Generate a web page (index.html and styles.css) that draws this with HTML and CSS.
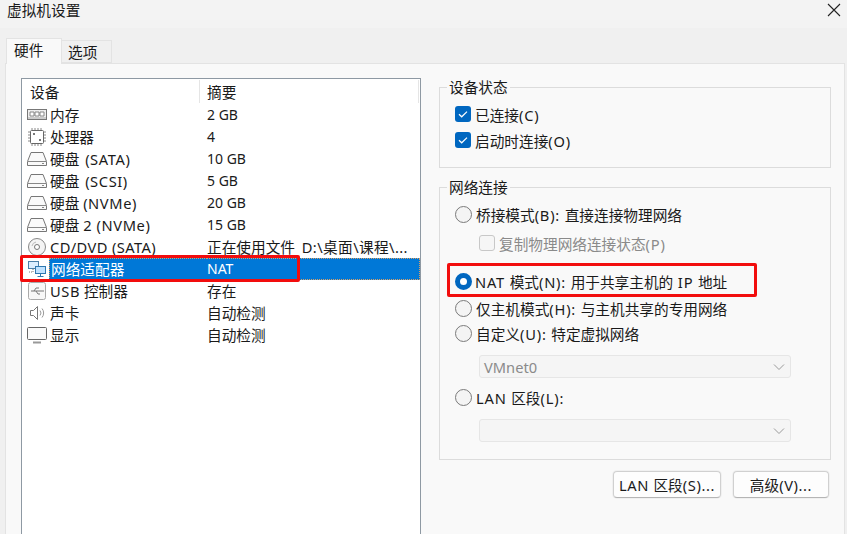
FILE: index.html
```html
<!DOCTYPE html>
<html>
<head>
  <meta charset="utf-8">
  <title>虚拟机设置</title>
  <link rel="stylesheet" href="styles.css">
</head>
<body>
  <div class="dialog">
    <div class="titlebar">
      <span>虚拟机设置</span>
      <svg class="close" width="14" height="14" viewBox="0 0 14 14"><path d="M1 1L13 13M13 1L1 13" stroke="#222" stroke-width="1.1" fill="none"/></svg>
    </div>

    <div class="tabs">
      <div class="tab active">硬件</div>
      <div class="tab">选项</div>
    </div>

    <div class="panel">
      <!-- 设备列表 -->
      <div class="device-list">
        <div class="list-head">
          <div class="head-device">设备</div>
          <div class="head-summary">摘要</div>
        </div>

        <div class="row">
          <svg class="icon" viewBox="0 0 20 20"><rect x="0.5" y="4.5" width="19" height="10" fill="#eee" stroke="#777"/><path d="M3 7h4v4H3zM8 7h4v4H8zM13 7h4v4h-4z" fill="#fff" stroke="#888"/><path d="M1 13h18" stroke="#aaa"/></svg>
          <span class="name">内存</span><span class="summary num">2 GB</span>
        </div>
        <div class="row">
          <svg class="icon" viewBox="0 0 20 20"><rect x="3.5" y="3.5" width="13" height="13" rx="1" fill="#fff" stroke="#666"/><path d="M5 1v2M8 1v2M11 1v2M14 1v2M5 17v2M8 17v2M11 17v2M14 17v2M1 5h2M1 8h2M1 11h2M1 14h2M17 5h2M17 8h2M17 11h2M17 14h2" stroke="#888"/><path d="M6 6h2v2H6zM12 12h2v2h-2z" fill="#777"/></svg>
          <span class="name">处理器</span><span class="summary num">4</span>
        </div>
        <div class="row">
          <svg class="icon" viewBox="0 0 20 20"><path d="M4 3.5h12l3.5 9v4h-19v-4z" fill="#fafafa" stroke="#777"/><path d="M1 12.5h18" stroke="#888"/><path d="M15 14.5h2" stroke="#888"/></svg>
          <span class="name">硬盘 <span class="lat bus">(SATA)</span></span><span class="summary num">10 GB</span>
        </div>
        <div class="row">
          <svg class="icon" viewBox="0 0 20 20"><path d="M4 3.5h12l3.5 9v4h-19v-4z" fill="#fafafa" stroke="#777"/><path d="M1 12.5h18" stroke="#888"/><path d="M15 14.5h2" stroke="#888"/></svg>
          <span class="name">硬盘 <span class="lat bus">(SCSI)</span></span><span class="summary num">5 GB</span>
        </div>
        <div class="row">
          <svg class="icon" viewBox="0 0 20 20"><path d="M4 3.5h12l3.5 9v4h-19v-4z" fill="#fafafa" stroke="#777"/><path d="M1 12.5h18" stroke="#888"/><path d="M15 14.5h2" stroke="#888"/></svg>
          <span class="name">硬盘 <span class="lat">(NVMe)</span></span><span class="summary num">20 GB</span>
        </div>
        <div class="row">
          <svg class="icon" viewBox="0 0 20 20"><path d="M4 3.5h12l3.5 9v4h-19v-4z" fill="#fafafa" stroke="#777"/><path d="M1 12.5h18" stroke="#888"/><path d="M15 14.5h2" stroke="#888"/></svg>
          <span class="name">硬盘 <span class="lat">2 (NVMe)</span></span><span class="summary num">15 GB</span>
        </div>
        <div class="row">
          <svg class="icon" viewBox="0 0 20 20"><circle cx="10" cy="10" r="8.5" fill="#f4f4f4" stroke="#888"/><circle cx="10" cy="10" r="2.5" fill="#fff" stroke="#777"/><path d="M5 9a5 5 0 0 1 4-4" stroke="#bbb" fill="none"/></svg>
          <span class="name cd">CD/DVD (SATA)</span><span class="summary">正在使用文件 <span class="path">D:\桌面\课程\...</span></span>
        </div>
        <div class="row selected">
          <svg class="icon" viewBox="0 0 20 20"><rect x="1.5" y="2.5" width="10" height="7" fill="#dbeeff" stroke="#4a7fa8"/><path d="M6 10v3H2" stroke="#777" stroke-dasharray="1 1" fill="none"/><rect x="8.5" y="7.5" width="10" height="7" fill="#bfe2ff" stroke="#2f78b0"/><path d="M13.5 15v2M10.5 17.5h6" stroke="#2f78b0"/></svg>
          <span class="name">网络适配器</span><span class="summary num">NAT</span>
        </div>
        <div class="row">
          <svg class="icon" viewBox="0 0 20 20"><rect x="1.5" y="1.5" width="17" height="17" rx="2" fill="#f8f8f8" stroke="#aaa"/><path d="M4 10h12M7 10l2-3h3M9 10l2 3h2" stroke="#777" fill="none"/><path d="M16 9v2l1-1z" fill="#777"/></svg>
          <span class="name"><span class="lat">USB</span> 控制器</span><span class="summary">存在</span>
        </div>
        <div class="row">
          <svg class="icon" viewBox="0 0 20 20"><path d="M3.5 7.5h3l4-4v13l-4-4h-3z" fill="#fff" stroke="#777"/><path d="M13 7.5a4 4 0 0 1 0 5M15 5.5a7 7 0 0 1 0 9" stroke="#999" fill="none"/></svg>
          <span class="name">声卡</span><span class="summary">自动检测</span>
        </div>
        <div class="row">
          <svg class="icon" viewBox="0 0 20 20"><rect x="0.5" y="2.5" width="19" height="12" rx="1" fill="#fafafa" stroke="#666"/><path d="M6 17.5h8" stroke="#999" stroke-width="2"/></svg>
          <span class="name">显示</span><span class="summary">自动检测</span>
        </div>
      </div>

      <!-- 右侧设置 -->
      <div class="settings">
        <fieldset class="group status-group">
          <legend>设备状态</legend>
          <div class="opt">
            <span class="check"><svg width="16" height="16" viewBox="0 0 16 16"><path d="M4 8.2l2.7 2.6L12 5.6" stroke="#fff" stroke-width="1.2" fill="none"/></svg></span>
            <span>已连接<span class="lat">(C)</span></span>
          </div>
          <div class="opt opt-next">
            <span class="check"><svg width="16" height="16" viewBox="0 0 16 16"><path d="M4 8.2l2.7 2.6L12 5.6" stroke="#fff" stroke-width="1.2" fill="none"/></svg></span>
            <span>启动时连接<span class="lat">(O)</span></span>
          </div>
        </fieldset>

        <fieldset class="group net-group">
          <legend>网络连接</legend>
          <div class="opt"><span class="radio"></span><span>桥接模式<span class="lat">(B): </span>直接连接物理网络</span></div>
          <div class="opt sub disabled"><span class="check off"></span><span>复制物理网络连接状态<span class="lat">(P)</span></span></div>
          <div class="opt nat"><span class="radio on"></span><span><span class="lat">NAT </span>模式<span class="lat">(N): </span>用于共享主机的<span class="lat"> IP </span>地址</span></div>
          <div class="opt host"><span class="radio"></span><span>仅主机模式<span class="lat">(H): </span>与主机共享的专用网络</span></div>
          <div class="opt custom"><span class="radio"></span><span>自定义<span class="lat">(U): </span>特定虚拟网络</span></div>
          <div class="combo combo-vmnet">VMnet0
            <svg width="12" height="8" viewBox="0 0 12 8"><path d="M1 1.5l5 5 5-5" stroke="#9a9a9a" fill="none"/></svg>
          </div>
          <div class="opt lan"><span class="radio"></span><span><span class="lat">LAN </span>区段<span class="lat">(L):</span></span></div>
          <div class="combo combo-lan">
            <svg width="12" height="8" viewBox="0 0 12 8"><path d="M1 1.5l5 5 5-5" stroke="#9a9a9a" fill="none"/></svg>
          </div>
        </fieldset>

        <div class="buttons">
          <button class="btn btn-lan"><span class="lat">LAN </span>区段<span class="lat">(S)...</span></button>
          <button class="btn btn-adv">高级<span class="lat">(V)...</span></button>
        </div>
      </div>
    </div>

    <!-- 红色标注框 -->
    <div class="mark mark-left"></div>
    <div class="mark mark-right"></div>
  </div>
</body>
</html>
```

FILE: styles.css
```css
* {
  margin: 0;
  padding: 0;
  box-sizing: border-box;
}

body {
  font-family: "Noto Sans", "Noto Sans CJK SC", sans-serif;
  font-size: 14.67px;
  color: #1a1a1a;
  background: #f9f9f9;
}

/* 拉丁字符略宽 */
.lat {
  letter-spacing: 0.6px;
}

.bus {
  margin-left: 2px;
}

.cd {
  letter-spacing: 0.4px;
}

.path {
  margin-left: 3px;
  letter-spacing: 0.4px;
}

.dialog {
  position: relative;
  width: 847px;
  height: 534px;
  overflow: hidden;
  background: #f0f0f0;
}

.titlebar {
  height: 28px;
  padding: 0 6px 0 7px;
  background: #f3f3f3;
  display: flex;
  align-items: flex-start;
  justify-content: space-between;
  line-height: 20px;
}

.close {
  margin-top: 3px;
}

.tabs {
  height: 35px;
  padding: 11px 0 0 6px;
  display: flex;
  align-items: flex-end;
  background: #f0f0f0;
}

.tab {
  width: 50px;
  height: 23px;
  padding-left: 6px;
  line-height: 23px;
  background: #f0f0f0;
  border: 1px solid #e3e3e3;
  border-left: none;
}

.tab.active {
  width: 56px;
  height: 26px;
  margin-bottom: -1px;
  padding-left: 7px;
  line-height: 22px;
  background: #f9f9f9;
  border: 1px solid #e3e3e3;
  border-bottom: none;
  position: relative;
  z-index: 1;
}

.panel {
  height: 471px;
  margin: 0 2px 0 5px;
  padding: 14px 13px 0 15px;
  background: #f9f9f9;
  border: 1px solid #e3e3e3;
  border-bottom: none;
  display: flex;
  gap: 18px;
}

/* 设备列表 */
.device-list {
  width: 400px;
  height: 470px;
  background: #fff;
  border: 1px solid #8e99a3;
  border-bottom: none;
  flex-shrink: 0;
}

.list-head {
  height: 25px;
  display: flex;
}

.head-device {
  width: 178px;
  padding-left: 8px;
  border-right: 1px solid #e5e5e5;
  margin: 1px 0;
  line-height: 24px;
}

.head-summary {
  flex: 1;
  padding-left: 7px;
  border-right: 1px solid #e5e5e5;
  margin: 1px 1px 1px 0;
  line-height: 24px;
}

.row {
  height: 22px;
  display: flex;
  align-items: center;
  line-height: 22px;
  white-space: nowrap;
}

.icon {
  width: 20px;
  height: 20px;
  margin: 0 3px 0 5px;
  flex-shrink: 0;
}

.name {
  width: 157px;
  height: 22px;
}

.summary {
  width: 213px;
  height: 22px;
}

.num {
  font-size: 14px;
}

.row.selected {
  color: #fff;
}

.row.selected .name,
.row.selected .summary {
  background: #0078d7;
}

.row.selected .name {
  padding-left: 1px;
  margin-left: -1px;
  width: 158px;
  border: 1px dotted #d9a066;
  border-right: none;
  line-height: 20px;
}

.row.selected .summary {
  border: 1px dotted #d9a066;
  border-left: none;
  line-height: 20px;
}

/* 右侧设置 */
.settings {
  width: 392px;
  flex-shrink: 0;
}

.group {
  border: 1px solid #dcdcdc;
  padding: 0 15px;
}

.group legend {
  margin-left: -8px;
  padding: 0 2px;
  height: 20px;
  line-height: 20px;
}

.status-group {
  height: 91px;
  margin-top: -1px;
  padding-top: 5px;
}

.net-group {
  height: 283px;
  margin-top: 9px;
  padding-top: 5px;
}

.opt {
  height: 24px;
  display: flex;
  align-items: center;
  gap: 4px;
  white-space: nowrap;
}

.opt .lat {
  letter-spacing: 0.8px;
}

.opt-next {
  margin-top: 2px;
}

.sub {
  margin-top: 5px;
  padding-left: 24px;
}

.nat {
  margin-top: 14px;
  gap: 3px;
}

.host {
  margin-top: 3px;
}

.custom {
  margin-top: 1px;
}

.lan {
  margin-top: 7px;
}

.disabled {
  color: #8a8a8a;
}

.check {
  width: 16px;
  height: 16px;
  border-radius: 3px;
  background: #0067c0;
  flex-shrink: 0;
  display: block;
}

.check svg {
  display: block;
}

.check.off {
  background: #f6f6f6;
  border: 1px solid #c8c8c8;
}

.radio {
  width: 17px;
  height: 17px;
  border-radius: 50%;
  background: #f4f4f4;
  border: 1px solid #7b7b7b;
  flex-shrink: 0;
}

.radio.on {
  background: #fff;
  border: 5px solid #0067c0;
}

.combo {
  width: 312px;
  height: 23px;
  margin-left: 24px;
  padding: 0 5px 0 4px;
  display: flex;
  align-items: center;
  justify-content: space-between;
  background: #f5f5f5;
  border: 1px solid #e6e6e6;
  border-radius: 3px;
  color: #8a8a8a;
}

.combo-vmnet {
  margin-top: 10px;
}

.combo-lan {
  margin-top: 10px;
  justify-content: flex-end;
}

.buttons {
  display: flex;
  justify-content: flex-end;
  gap: 12px;
  margin-top: 11px;
  padding-right: 2px;
}

.btn {
  height: 27px;
  font: inherit;
  color: inherit;
  background: #fdfdfd;
  border: 1px solid #d0d0d0;
  border-bottom-color: #b5b5b5;
  border-radius: 4px;
  box-shadow: 0 0 0 1px #f0f0f0;
}

.btn-lan {
  width: 108px;
}

.btn-adv {
  width: 96px;
}

/* 标注 */
.mark {
  position: absolute;
  border: 3px solid #f20d0d;
  border-radius: 2px;
}

.mark-left {
  left: 20px;
  top: 255px;
  width: 280px;
  height: 27px;
}

.mark-right {
  left: 447px;
  top: 263px;
  width: 310px;
  height: 34px;
}
```
